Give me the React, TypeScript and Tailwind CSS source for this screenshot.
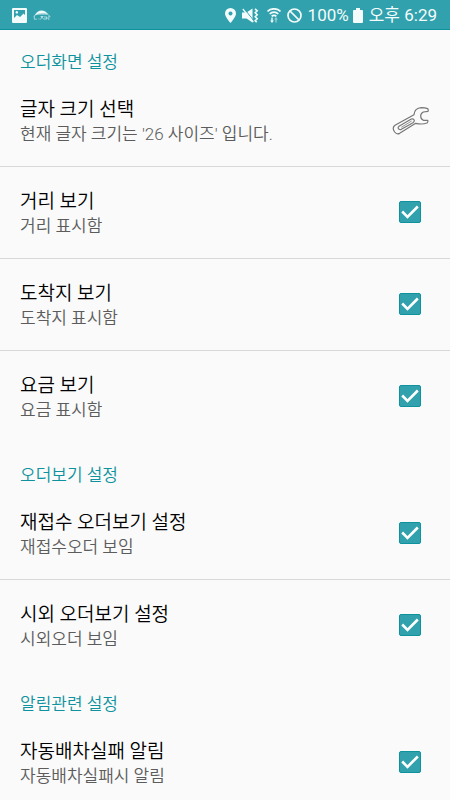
import { useState } from "react";
import { clsx } from "clsx";

const sections = [
  {
    title: "오더화면 설정",
    items: [
      { id: "font-size", title: "글자 크기 선택", summary: "현재 글자 크기는 '26 사이즈' 입니다.", action: true },
      { id: "distance", title: "거리 보기", summary: "거리 표시함" },
      { id: "destination", title: "도착지 보기", summary: "도착지 표시함" },
      { id: "fare", title: "요금 보기", summary: "요금 표시함" },
    ],
  },
  {
    title: "오더보기 설정",
    items: [
      { id: "reaccept", title: "재접수 오더보기 설정", summary: "재접수오더 보임" },
      { id: "suburb", title: "시외 오더보기 설정", summary: "시외오더 보임" },
    ],
  },
  {
    title: "알림관련 설정",
    items: [{ id: "auto-fail", title: "자동배차실패 알림", summary: "자동배차실패시 알림" }],
  },
];

interface Item {
  id: string;
  title: string;
  summary: string;
  action?: boolean;
}

function StatusBar() {
  return (
    <header className="flex h-[30px] shrink-0 items-center justify-between border-b border-[#0d929e] bg-[#31a1ad] pt-px pr-[13px] pl-3 font-normal text-[#f4fbfb]">
      <div className="flex items-center gap-1.5">
        {/* Picture */}
        <svg width="15" height="15" viewBox="0 0 15 15">
          <path
            fill="currentColor"
            fillRule="evenodd"
            d="M1 0h13a1 1 0 0 1 1 1v13a1 1 0 0 1-1 1H1a1 1 0 0 1-1-1V1a1 1 0 0 1 1-1zM2 2v8l3-3 3 2 3.500-3.500L13 7V2zM4.800 3a1.300 1.300 0 1 0 .01 0z"
          />
        </svg>
        {/* Taxi */}
        <svg width="18" height="11" viewBox="0 0 18 11" fill="none" stroke="currentColor">
          <path d="M2.500 4.500C4 2 6 .8 8.500.8s4.500 1.200 6 3c-4-.8-8-.6-12 .7z" fill="currentColor" strokeWidth=".5" />
          <path d="M.7 6.200C2 4.800 4 4.300 6 4.200h7c2 0 3.800 1 4 3" strokeWidth=".8" opacity=".7" />
          <path
            d="M1.300 6v3.200h2.500M5.500 9h1M7.500 6.500h3M9 6.500L7.600 9.500M9 7l1.800 2.500M12 6v4M13.500 6.500v3M13.500 8H15M15.800 6v4"
            strokeWidth=".8"
            opacity=".75"
          />
        </svg>
      </div>

      <div className="flex items-center">
        {/* Location */}
        <svg width="11" height="15" viewBox="0 0 11 15" className="mr-1.5">
          <path
            fill="currentColor"
            fillRule="evenodd"
            d="M5.500 0A5.500 5.500 0 0 0 0 5.500C0 9 5.500 15 5.500 15S11 9 11 5.500A5.500 5.500 0 0 0 5.500 0zM5.500 3.500a2 2 0 1 0 .01 0z"
          />
        </svg>
        {/* Sound off, vibrate */}
        <svg width="17" height="15" viewBox="0 0 17 15" className="mr-2">
          <path fill="currentColor" d="M0 4.500h4.500L10.500.5v14l-6-4H0z" />
          <path stroke="#31a1ad" strokeWidth="1" d="M2 .5l10 12.500" />
          <path stroke="currentColor" strokeWidth="1.200" d="M.8 1l10.500 13" />
          <path
            fill="none"
            stroke="currentColor"
            strokeWidth="1.600"
            d="M13 .8l2.200 2-2 2 2 2-2 2 2 2-2 2 1.500 1.500"
          />
        </svg>
        {/* Wifi */}
        <svg width="14" height="15" viewBox="0 0 14 15" className="mr-1.5">
          <g fill="none" stroke="currentColor" strokeWidth="1.700">
            <path d="M.5 3.500c3.500-3.600 9.500-3.600 13 0" />
            <path d="M2.700 6c2.300-2.400 6.300-2.400 8.600 0" />
            <path d="M4.700 8.300c1.200-1.300 3.400-1.300 4.600 0" />
          </g>
          <path fill="currentColor" d="M4.300 9.500h1.400v3h1.200L5 15l-1.900-2.500h1.200z" />
          <path fill="currentColor" opacity=".5" d="M8.300 14.500v-3H7.100L9 9l1.900 2.500H9.700v3z" />
        </svg>
        {/* Blocked */}
        <svg width="15" height="15" viewBox="0 0 15 15" fill="none" stroke="currentColor" strokeWidth="1.700" className="mr-1.5">
          <circle cx="7.500" cy="7.500" r="6.500" />
          <path d="M3 3l9 9" />
        </svg>
        <span className="mr-1 text-[17px] leading-6">100%</span>
        {/* Battery */}
        <svg width="10" height="15" viewBox="0 0 10 15" className="mr-1.5">
          <path fill="currentColor" d="M3 0h4v2h2a1 1 0 0 1 1 1v11a1 1 0 0 1-1 1H1a1 1 0 0 1-1-1V3a1 1 0 0 1 1-1h2z" />
        </svg>
        <span className="text-[17px] leading-6">오후 6:29</span>
      </div>
    </header>
  );
}

function Wrench() {
  return (
    <svg
      width="37"
      height="29"
      viewBox="34 47 111 87"
      fill="none"
      stroke="#777"
      strokeWidth="3.600"
      strokeLinejoin="round"
      className="shrink-0"
    >
      <path d="M100 73C101 60 109 53 122 52C129 52 136 53 141 55Q144 59 142 63L128 65Q120 69 120 77Q120 86 128 90L141 90Q143 94 139 98C129 102 119 102 105 99L57 129Q48 133 42 125Q33 112 43 105Z" />
      <path d="M55 108L92 86Q99 84 101 90Q101 94 97 97L62 117Q56 119 53 115Q51 111 55 108Z" />
      <path d="M62 111L93 92" strokeWidth="2.400" />
    </svg>
  );
}

function RowText({ item }: { item: Item }) {
  return (
    <span className="block min-w-0 flex-1 pt-1 pb-0.5">
      <span className="block text-[19px] leading-[26px] text-black">{item.title}</span>
      <span className="block text-[17px] leading-[22px] text-[#5c5c5c]">{item.summary}</span>
    </span>
  );
}

function CheckRow({ item }: { item: Item }) {
  const [checked, setChecked] = useState(true);

  return (
    <label className="flex items-center pt-[18px] pr-[29px] pb-[19px] pl-5">
      <RowText item={item} />
      <span className="grid shrink-0 place-items-center">
        <input
          type="checkbox"
          checked={checked}
          onChange={() => setChecked(!checked)}
          className="col-start-1 row-start-1 size-[22px] appearance-none rounded-[2px] border border-[#0d929e] checked:bg-[#31a1ad]"
        />
        {checked && (
          <svg width="18" height="14" viewBox="0 0 18 14" className="pointer-events-none col-start-1 row-start-1">
            <path fill="none" stroke="#fff" strokeWidth="2.600" d="M1.200 6.500l5.300 5.300L16.800 1.500" />
          </svg>
        )}
      </span>
    </label>
  );
}

export default function App() {
  return (
    <div className="flex h-screen flex-col bg-[#fafafa] font-['Roboto','Noto_Sans_CJK_KR',sans-serif] font-[350]">
      <StatusBar />
      <main className="min-h-0 flex-1 overflow-y-auto [scrollbar-width:none]">
        {sections.map((section) => (
          <section key={section.title}>
            <h2 className="px-5 pt-5 pb-px text-[17px] leading-6 font-[350] text-[#0d929e]">{section.title}</h2>
            <ul>
              {section.items.map((item: Item, i) => (
                <li
                  key={item.id}
                  className={clsx("border-b", i < section.items.length - 1 ? "border-[#d8d8d8]" : "border-transparent")}
                >
                  {item.action ? (
                    <button type="button" className="flex w-full items-center pt-[18px] pr-[21px] pb-[19px] pl-5 text-left">
                      <RowText item={item} />
                      <Wrench />
                    </button>
                  ) : (
                    <CheckRow item={item} />
                  )}
                </li>
              ))}
            </ul>
          </section>
        ))}
      </main>
    </div>
  );
}
